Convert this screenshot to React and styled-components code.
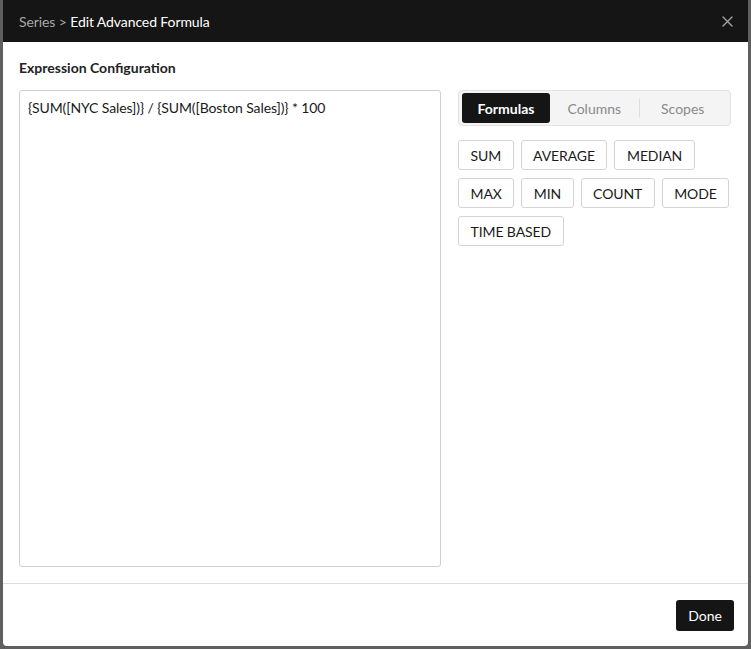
import React, { useState } from "react";
import styled, { createGlobalStyle } from "styled-components";

const GlobalStyle = createGlobalStyle`
  html, body {
    margin: 0;
    padding: 0;
    background: #5f5f5f;
    font-family: Lato, "Open Sans", sans-serif;
  }
  * { box-sizing: border-box; }
`;

const formulas = [
  ["SUM", "AVERAGE", "MEDIAN"],
  ["MAX", "MIN", "COUNT", "MODE"],
  ["TIME BASED"],
];

const tabs = ["Formulas", "Columns", "Scopes"];

const App = () => {
  const [active, setActive] = useState("Formulas");
  return (
    <>
      <GlobalStyle />
      <Backdrop>
        <Modal>
          <Header>
            <Title>
              <span className="crumb">Series &gt; </span>
              Edit Advanced Formula
            </Title>
            <CloseBtn type="button" aria-label="close">
              <svg width="11" height="11" viewBox="0 0 11 11">
                <path
                  d="M1 1 L10 10 M10 1 L1 10"
                  stroke="#a8a8a8"
                  strokeWidth="1.3"
                  strokeLinecap="round"
                />
              </svg>
            </CloseBtn>
          </Header>
          <Body>
            <SectionTitle>Expression Configuration</SectionTitle>
            <Columns>
              <Editor>{"{SUM([NYC Sales])} / {SUM([Boston Sales])} * 100"}</Editor>
              <Side>
                <TabBar>
                  {tabs.map((t, i) => (
                    <Tab
                      key={t}
                      $active={active === t}
                      $divider={i === 2 && active !== "Columns" && active !== "Scopes"}
                      onClick={() => setActive(t)}
                    >
                      {t}
                    </Tab>
                  ))}
                </TabBar>
                <ChipGrid>
                  {formulas.map((row, i) => (
                    <ChipRow key={i}>
                      {row.map((f) => (
                        <Chip key={f} type="button">
                          {f}
                        </Chip>
                      ))}
                    </ChipRow>
                  ))}
                </ChipGrid>
              </Side>
            </Columns>
          </Body>
          <Footer>
            <DoneBtn type="button">Done</DoneBtn>
          </Footer>
        </Modal>
      </Backdrop>
    </>
  );
};

const Backdrop = styled.div`
  padding: 0 3px 3px 3px;
`;

const Modal = styled.div`
  height: 646px;
  background: #fff;
  border-radius: 0 0 4px 4px;
  display: flex;
  flex-direction: column;
  overflow: hidden;
`;

const Header = styled.header`
  height: 42px;
  background: #151515;
  display: flex;
  align-items: center;
  justify-content: space-between;
  padding: 0 11px 0 16px;
  flex-shrink: 0;
`;

const Title = styled.h2`
  margin: 0;
  font-size: 14px;
  font-weight: 400;
  color: #fff;
  letter-spacing: -0.1px;
  .crumb {
    color: #a8a8a8;
  }
`;

const CloseBtn = styled.button`
  background: transparent;
  border: none;
  padding: 4px;
  display: flex;
  cursor: pointer;
`;

const Body = styled.div`
  flex: 1;
  padding: 16px 16px 16px 16px;
  display: flex;
  flex-direction: column;
  border-bottom: 1px solid #dedede;
`;

const SectionTitle = styled.h3`
  margin: 0 0 12px;
  font-size: 14px;
  line-height: 20px;
  font-weight: 700;
  color: #222;
`;

const Columns = styled.div`
  flex: 1;
  display: grid;
  grid-template-columns: 422px 273px;
  column-gap: 17px;
`;

const Editor = styled.div`
  border: 1px solid #cfcfcf;
  border-radius: 3px;
  padding: 8px 8px;
  font-size: 14px;
  line-height: 18px;
  letter-spacing: -0.1px;
  color: #1a1a1a;
`;

const Side = styled.div`
  display: flex;
  flex-direction: column;
  gap: 14px;
`;

const TabBar = styled.div`
  height: 36px;
  background: #f4f4f4;
  border: 1px solid #e2e2e2;
  border-radius: 4px;
  padding: 2px 3px;
  display: grid;
  grid-template-columns: 88px 1fr 1fr;
  align-items: stretch;
`;

const Tab = styled.div`
  display: flex;
  align-items: center;
  justify-content: center;
  font-size: 14px;
  border-radius: 3px;
  cursor: pointer;
  position: relative;
  color: ${(p) => (p.$active ? "#fff" : "#8a8a8a")};
  background: ${(p) => (p.$active ? "#151515" : "transparent")};
  font-weight: ${(p) => (p.$active ? 700 : 400)};
  &::before {
    content: "";
    display: ${(p) => (p.$divider ? "block" : "none")};
    position: absolute;
    left: 0;
    top: 6px;
    bottom: 6px;
    width: 1px;
    background: #dcdcdc;
  }
`;

const ChipGrid = styled.div`
  display: flex;
  flex-direction: column;
  gap: 8px;
`;

const ChipRow = styled.div`
  display: flex;
  gap: 7px;
`;

const Chip = styled.button`
  height: 30px;
  padding: 0 11.5px;
  background: #fff;
  border: 1px solid #d4d4d4;
  border-radius: 3px;
  font-family: Lato, "Open Sans", sans-serif;
  font-size: 14px;
  letter-spacing: -0.1px;
  color: #1a1a1a;
  cursor: pointer;
  flex-grow: 0;
  &:hover {
    background: #f6f6f6;
  }
`;

const Footer = styled.footer`
  height: 62px;
  flex-shrink: 0;
  display: flex;
  align-items: center;
  justify-content: flex-end;
  padding: 0 14px;
`;

const DoneBtn = styled.button`
  height: 31px;
  padding: 0 12px;
  background: #151515;
  color: #fff;
  border: none;
  border-radius: 3px;
  font-family: Lato, "Open Sans", sans-serif;
  font-size: 14px;
  cursor: pointer;
`;

export default App;
